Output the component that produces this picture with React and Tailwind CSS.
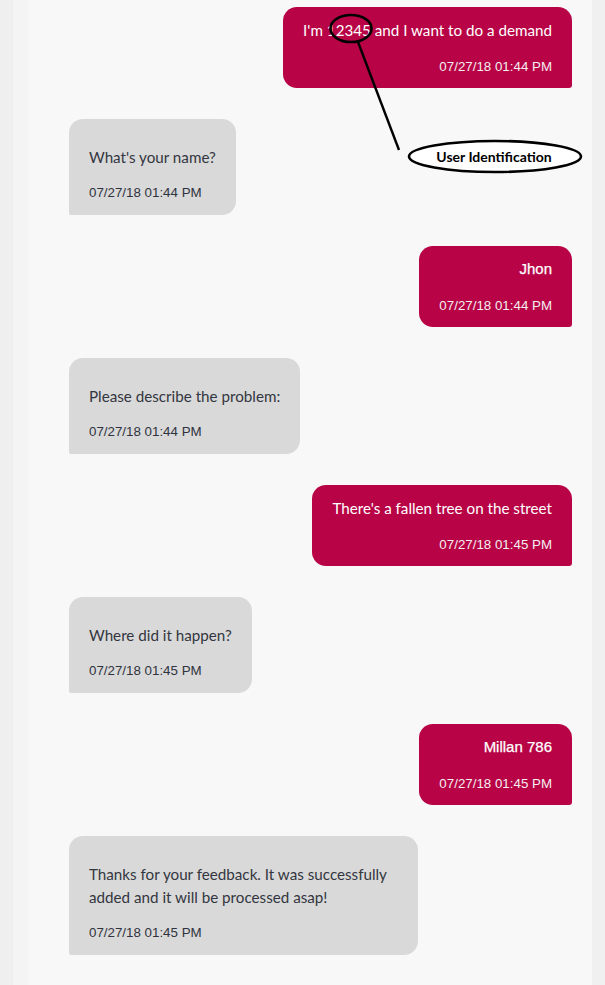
import React from "react";

function UserBubble({ text, time, arial }) {
  return (
    <div className="flex justify-end">
      <div className="max-w-[349px] bg-[#b80446] text-white rounded-tl-[14px] rounded-tr-[14px] rounded-bl-[14px] rounded-br-[3px] pl-[20px] pr-[20px] pt-[12px] pb-[13px] flex flex-col items-end">
        <div
          className={
            arial
              ? "text-[15px] leading-[22px] font-['Liberation_Sans',Arial,sans-serif] [-webkit-text-stroke:0.25px_white]"
              : "text-[15.2px] leading-[22px] font-['Lato',sans-serif]"
          }
        >
          {text}
        </div>
        <div className="mt-[18px] text-[13.33px] leading-[16px] font-['Liberation_Sans',Arial,sans-serif] text-[#f4eef0]">
          {time}
        </div>
      </div>
    </div>
  );
}

function BotBubble({ children, time }) {
  return (
    <div className="flex justify-start">
      <div className="max-w-[349px] bg-[#d9d9d9] text-[#333640] rounded-tl-[14px] rounded-tr-[14px] rounded-br-[14px] rounded-bl-[2px] pl-[20px] pr-[20px] pt-[27px] pb-[14px] flex flex-col items-start">
        <div className="text-[15.2px] leading-[23px] font-['Lato',sans-serif]">{children}</div>
        <div className="mt-[16px] text-[13.33px] leading-[16px] font-['Liberation_Sans',Arial,sans-serif] text-[#2f3340]">
          {time}
        </div>
      </div>
    </div>
  );
}

export default function App() {
  return (
    <div className="relative flex min-h-[985px] w-full">
      <div className="w-[13px] shrink-0 bg-[#efefef]" />
      <div className="w-[16px] shrink-0 bg-[#f4f4f4]" />
      <div className="flex-1 bg-[#f8f8f8] pt-[7px] pl-[40px] pr-[20px] pb-[31px] flex flex-col gap-[31px]">
        <UserBubble text="I'm 12345 and I want to do a demand" time="07/27/18 01:44 PM" />
        <BotBubble time="07/27/18 01:44 PM">What's your name?</BotBubble>
        <UserBubble text="Jhon" time="07/27/18 01:44 PM" arial />
        <BotBubble time="07/27/18 01:44 PM">Please describe the problem:</BotBubble>
        <UserBubble text="There's a fallen tree on the street" time="07/27/18 01:45 PM" />
        <BotBubble time="07/27/18 01:45 PM">Where did it happen?</BotBubble>
        <UserBubble text="Millan 786" time="07/27/18 01:45 PM" arial />
        <BotBubble time="07/27/18 01:45 PM">
          Thanks for your feedback. It was successfully added and it will be processed asap!
        </BotBubble>
      </div>
      <div className="w-[13px] shrink-0 bg-[#f0f0f0]" />

      <svg
        className="absolute left-0 top-0 pointer-events-none"
        width="605"
        height="200"
        viewBox="0 0 605 200"
      >
        <ellipse cx="351" cy="28.5" rx="20.5" ry="13.5" fill="none" stroke="#000" strokeWidth="2.6" />
        <line x1="358" y1="42" x2="399" y2="150" stroke="#000" strokeWidth="2.4" />
        <ellipse cx="495" cy="156.5" rx="86" ry="15.5" fill="white" stroke="#000" strokeWidth="2.6" />
        <text
          x="494"
          y="161.5"
          textAnchor="middle"
          fontSize="14"
          fontWeight="700"
          fill="#000"
          style={{ fontFamily: "Lato, 'Open Sans', sans-serif" }}
        >
          User Identification
        </text>
      </svg>
    </div>
  );
}
